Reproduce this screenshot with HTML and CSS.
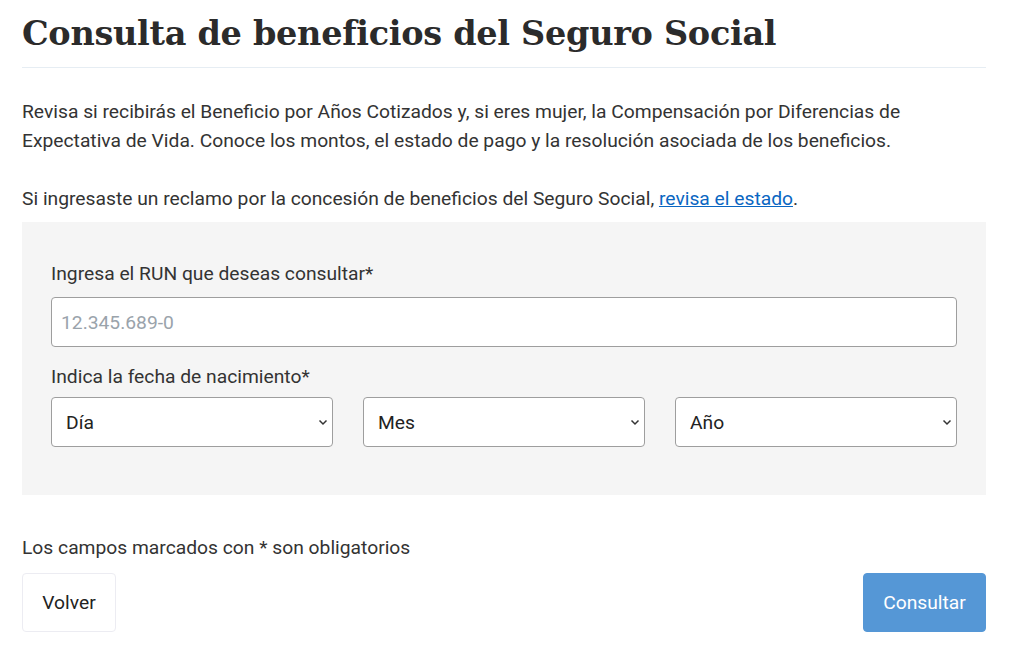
FILE: index.html
```html
<!DOCTYPE html>
<html lang="es">
<head>
<meta charset="utf-8">
<title>Consulta de beneficios del Seguro Social</title>
<link rel="stylesheet" href="styles.css">
</head>
<body>
<main class="page">
  <h1 class="title">Consulta de beneficios del Seguro Social</h1>
  <p class="intro">Revisa si recibirás el Beneficio por Años Cotizados y, si eres mujer, la Compensación por Diferencias de Expectativa de Vida. Conoce los montos, el estado de pago y la resolución asociada de los beneficios.</p>
  <p class="intro">Si ingresaste un reclamo por la concesión de beneficios del Seguro Social, <a href="#" class="link">revisa el estado</a>.</p>
  <form class="form-box">
    <label class="label" for="run">Ingresa el RUN que deseas consultar*</label>
    <input class="field" id="run" type="text" placeholder="12.345.689-0">
    <span class="label label-date">Indica la fecha de nacimiento*</span>
    <div class="date-row">
      <div class="select"><span>Día</span><svg viewBox="0 0 10 7" class="chev"><path d="M1.5 1.5l3.5 3.5 3.5-3.5" fill="none" stroke="#333" stroke-width="1.5"/></svg></div>
      <div class="select"><span>Mes</span><svg viewBox="0 0 10 7" class="chev"><path d="M1.5 1.5l3.5 3.5 3.5-3.5" fill="none" stroke="#333" stroke-width="1.5"/></svg></div>
      <div class="select"><span>Año</span><svg viewBox="0 0 10 7" class="chev"><path d="M1.5 1.5l3.5 3.5 3.5-3.5" fill="none" stroke="#333" stroke-width="1.5"/></svg></div>
    </div>
  </form>
  <p class="note">Los campos marcados con * son obligatorios</p>
  <div class="actions">
    <button class="btn btn-back" type="button">Volver</button>
    <button class="btn btn-primary" type="button">Consultar</button>
  </div>
</main>
</body>
</html>
```

FILE: styles.css
```css
* { box-sizing: border-box; }
html, body { margin: 0; padding: 0; background: #fff; }
body {
  font-family: Roboto, "Liberation Sans", Arial, sans-serif;
  color: #333;
}
.page {
  width: 964px;
  margin-left: 22px;
  padding-top: 10px;
}
.title {
  font-family: "DejaVu Serif", "Liberation Serif", serif;
  font-weight: bold;
  font-size: 33.5px;
  line-height: 48px;
  color: #2b2b2b;
  margin: 0;
  padding-bottom: 9px;
  border-bottom: 1px solid #e6edf3;
  letter-spacing: -0.3px;
}
.intro {
  font-size: 19.25px;
  line-height: 29px;
  margin: 29px 0 0 0;
}
.intro + .intro { margin-top: 29px; }
.link { color: #0a66c2; text-decoration: underline; }
.form-box {
  margin-top: 9px;
  background: #f5f5f5;
  padding: 40px 29px 48px 29px;
  display: flex;
  flex-direction: column;
}
.label {
  font-size: 19.25px;
  line-height: 24px;
  color: #333;
  margin-bottom: 11px;
}
.label-date { margin-top: 18px; margin-bottom: 8px; }
.field {
  width: 100%;
  height: 50px;
  border: 1px solid #9e9e9e;
  border-radius: 4px;
  background: #fff;
  padding: 0 9px;
  font-family: inherit;
  font-size: 19.25px;
  color: #333;
}
.field::placeholder { color: #9aa3ab; }
.date-row {
  display: grid;
  grid-template-columns: repeat(3, 1fr);
  gap: 30px;
}
.select {
  height: 50px;
  border: 1px solid #9e9e9e;
  border-radius: 4px;
  background: #fff;
  display: flex;
  align-items: center;
  justify-content: space-between;
  padding: 0 4px 0 14px;
  font-size: 19.25px;
  color: #222;
}
.chev { width: 10px; height: 7px; }
.note {
  font-size: 19.25px;
  line-height: 24px;
  margin: 41px 0 0 0;
}
.actions {
  display: flex;
  justify-content: space-between;
  margin-top: 13px;
}
.btn {
  height: 59px;
  border-radius: 4px;
  font-family: inherit;
  font-size: 19.25px;
  padding: 0 16px;
  cursor: pointer;
}
.btn-back {
  background: #fff;
  border: 1px solid #ececf2;
  color: #222;
  width: 94px;
}
.btn-primary {
  background: #5597d6;
  border: 1px solid #5597d6;
  color: #fff;
  width: 123px;
}
```
